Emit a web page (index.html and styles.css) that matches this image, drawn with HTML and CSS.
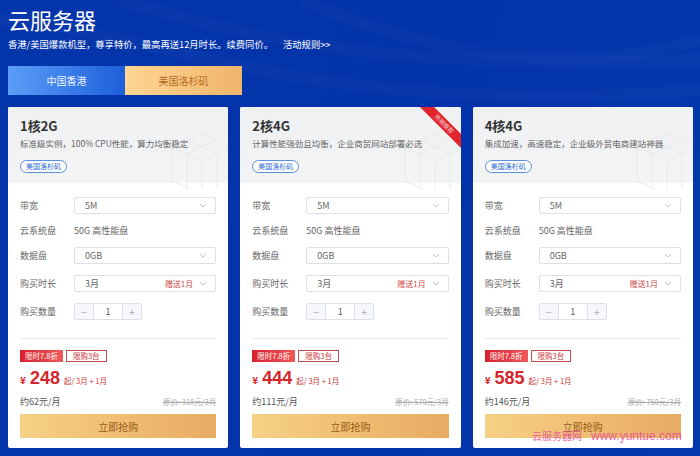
FILE: index.html
```html
<!DOCTYPE html>
<html lang="zh-CN">
  <head>
    <meta charset="UTF-8" />
    <meta name="viewport" content="width=device-width, initial-scale=1.0" />
    <title>云服务器</title>
    <link rel="stylesheet" href="styles.css">
  </head>
  <body>
    <div class="page">
      <svg class="waves" width="700" height="456" viewBox="0 0 700 456">
        <path d="M120 0 C 260 40, 380 70, 700 60" />
        <path d="M0 20 C 160 30, 300 120, 700 90" />
        <path d="M300 0 C 420 50, 560 80, 700 40" />
      </svg>

      <h1 class="title">云服务器</h1>
      <p class="intro">香港/美国爆款机型，尊享特价，最高再送12月时长。续费同价。<span class="rules">活动规则&gt;&gt;</span></p>

      <div class="tabs">
        <div class="tab tab-hk">中国香港</div>
        <div class="tab tab-us">美国洛杉矶</div>
      </div>

      <div class="cards">
        <div class="card">
          <div class="card-head">
            <svg class="cube" width="72" height="64" viewBox="0 0 72 64">
              <path d="M10 22 L40 8 L70 22 L40 36 Z M10 22 L10 56 L40 70 M40 36 L40 70 M70 22 L70 56 M25 15 L55 29 L55 64 M55 15 L25 29 L25 64" />
            </svg>
            <h2 class="plan">1核2G</h2>
            <p class="desc">标准级实例，100% CPU性能，算力均衡稳定</p>
            <span class="region">美国洛杉矶</span>
          </div>
          <div class="card-body">
            <div class="opts">
              <div class="opt">
                <span class="opt-label">带宽</span>
                <div class="select"><span class="sel-val">5M</span><svg class="chev" width="8" height="5" viewBox="0 0 8 5"><polyline points="1,1 4,4 7,1" /></svg></div>
              </div>
              <div class="opt opt-text">
                <span class="opt-label">云系统盘</span>
                <span class="opt-value">50G 高性能盘</span>
              </div>
              <div class="opt">
                <span class="opt-label">数据盘</span>
                <div class="select"><span class="sel-val">0GB</span><svg class="chev" width="8" height="5" viewBox="0 0 8 5"><polyline points="1,1 4,4 7,1" /></svg></div>
              </div>
              <div class="opt">
                <span class="opt-label">购买时长</span>
                <div class="select"><span class="sel-val">3月</span><span class="gift">赠送1月</span><svg class="chev" width="8" height="5" viewBox="0 0 8 5"><polyline points="1,1 4,4 7,1" /></svg></div>
              </div>
              <div class="opt">
                <span class="opt-label">购买数量</span>
                <div class="stepper"><span class="step">−</span><span class="qty">1</span><span class="step">+</span></div>
              </div>
            </div>
            <div class="divider"></div>
            <div class="badges"><span class="badge-off">限时7.8折</span><span class="badge-limit">限购3台</span></div>
            <div class="price"><span class="yen">¥</span><span class="amount">248</span><span class="unit">起/ 3月 + 1月</span></div>
            <div class="monthly"><span>约62元/月</span><span class="orig">原价: 318元/3月</span></div>
            <button class="buy">立即抢购</button>
          </div>
        </div>

        <div class="card">
          <div class="ribbon">热销推荐</div>
          <div class="card-head">
            <svg class="cube" width="72" height="64" viewBox="0 0 72 64">
              <path d="M10 22 L40 8 L70 22 L40 36 Z M10 22 L10 56 L40 70 M40 36 L40 70 M70 22 L70 56 M25 15 L55 29 L55 64 M55 15 L25 29 L25 64" />
            </svg>
            <h2 class="plan">2核4G</h2>
            <p class="desc">计算性能强劲且均衡，企业商贸网站部署必选</p>
            <span class="region">美国洛杉矶</span>
          </div>
          <div class="card-body">
            <div class="opts">
              <div class="opt">
                <span class="opt-label">带宽</span>
                <div class="select"><span class="sel-val">5M</span><svg class="chev" width="8" height="5" viewBox="0 0 8 5"><polyline points="1,1 4,4 7,1" /></svg></div>
              </div>
              <div class="opt opt-text">
                <span class="opt-label">云系统盘</span>
                <span class="opt-value">50G 高性能盘</span>
              </div>
              <div class="opt">
                <span class="opt-label">数据盘</span>
                <div class="select"><span class="sel-val">0GB</span><svg class="chev" width="8" height="5" viewBox="0 0 8 5"><polyline points="1,1 4,4 7,1" /></svg></div>
              </div>
              <div class="opt">
                <span class="opt-label">购买时长</span>
                <div class="select"><span class="sel-val">3月</span><span class="gift">赠送1月</span><svg class="chev" width="8" height="5" viewBox="0 0 8 5"><polyline points="1,1 4,4 7,1" /></svg></div>
              </div>
              <div class="opt">
                <span class="opt-label">购买数量</span>
                <div class="stepper"><span class="step">−</span><span class="qty">1</span><span class="step">+</span></div>
              </div>
            </div>
            <div class="divider"></div>
            <div class="badges"><span class="badge-off">限时7.8折</span><span class="badge-limit">限购3台</span></div>
            <div class="price"><span class="yen">¥</span><span class="amount">444</span><span class="unit">起/ 3月 + 1月</span></div>
            <div class="monthly"><span>约111元/月</span><span class="orig">原价: 570元/3月</span></div>
            <button class="buy">立即抢购</button>
          </div>
        </div>

        <div class="card">
          <div class="card-head">
            <svg class="cube" width="72" height="64" viewBox="0 0 72 64">
              <path d="M10 22 L40 8 L70 22 L40 36 Z M10 22 L10 56 L40 70 M40 36 L40 70 M70 22 L70 56 M25 15 L55 29 L55 64 M55 15 L25 29 L25 64" />
            </svg>
            <h2 class="plan">4核4G</h2>
            <p class="desc">集成加速，高速稳定，企业级外贸电商建站神器</p>
            <span class="region">美国洛杉矶</span>
          </div>
          <div class="card-body">
            <div class="opts">
              <div class="opt">
                <span class="opt-label">带宽</span>
                <div class="select"><span class="sel-val">5M</span><svg class="chev" width="8" height="5" viewBox="0 0 8 5"><polyline points="1,1 4,4 7,1" /></svg></div>
              </div>
              <div class="opt opt-text">
                <span class="opt-label">云系统盘</span>
                <span class="opt-value">50G 高性能盘</span>
              </div>
              <div class="opt">
                <span class="opt-label">数据盘</span>
                <div class="select"><span class="sel-val">0GB</span><svg class="chev" width="8" height="5" viewBox="0 0 8 5"><polyline points="1,1 4,4 7,1" /></svg></div>
              </div>
              <div class="opt">
                <span class="opt-label">购买时长</span>
                <div class="select"><span class="sel-val">3月</span><span class="gift">赠送1月</span><svg class="chev" width="8" height="5" viewBox="0 0 8 5"><polyline points="1,1 4,4 7,1" /></svg></div>
              </div>
              <div class="opt">
                <span class="opt-label">购买数量</span>
                <div class="stepper"><span class="step">−</span><span class="qty">1</span><span class="step">+</span></div>
              </div>
            </div>
            <div class="divider"></div>
            <div class="badges"><span class="badge-off">限时7.8折</span><span class="badge-limit">限购3台</span></div>
            <div class="price"><span class="yen">¥</span><span class="amount">585</span><span class="unit">起/ 3月 + 1月</span></div>
            <div class="monthly"><span>约146元/月</span><span class="orig">原价: 750元/3月</span></div>
            <button class="buy">立即抢购</button>
          </div>
        </div>
      </div>

      <div class="watermark"><span class="wm-cn">云服务器网</span><span class="wm-url">www.yuntue.com</span></div>
    </div>
  </body>
</html>
```

FILE: styles.css
```css
body {
  margin: 0;
  font-family: "Noto Sans CJK SC", "Noto Sans", sans-serif;
  background-color: #0435aa;
}

.page {
  position: relative;
  width: 700px;
  height: 456px;
  padding: 4px 7px 0 8px;
  box-sizing: border-box;
  overflow: hidden;
  background: linear-gradient(100deg, #0535ab 0%, #0333a8 60%, #0538ad 100%);
}

.waves {
  position: absolute;
  top: 0;
  left: 0;
}

.waves path {
  fill: none;
  stroke: rgba(255, 255, 255, 0.025);
  stroke-width: 12;
}

.title {
  position: relative;
  margin: 0;
  font-size: 22px;
  line-height: 30px;
  font-weight: 400;
  color: #fff;
}

.intro {
  position: relative;
  margin: 3px 0 0;
  font-size: 9.3px;
  line-height: 14px;
  color: #fff;
  white-space: nowrap;
}

.rules {
  margin-left: 10px;
}

.tabs {
  position: relative;
  display: flex;
  margin-top: 15px;
}

.tab {
  width: 117px;
  height: 29px;
  display: flex;
  align-items: center;
  justify-content: center;
  font-size: 10px;
}

.tab-hk {
  background: linear-gradient(90deg, #5b9ef6, #1c5fdb);
  color: #e6efff;
}

.tab-us {
  background: linear-gradient(90deg, #fdd693, #f1b46b);
  color: #b46a1e;
}

.cards {
  position: relative;
  display: flex;
  gap: 12px;
  margin-top: 12px;
}

.card {
  position: relative;
  flex: 1;
  height: 341px;
  background-color: #fff;
  border-radius: 2px;
  overflow: hidden;
}

.card-head {
  position: relative;
  height: 76px;
  padding: 10px 12px 0;
  box-sizing: border-box;
  background: linear-gradient(180deg, #eff0f2, #f3f4f6);
}

.cube {
  position: absolute;
  right: -6px;
  bottom: -6px;
}

.cube path {
  fill: none;
  stroke: #e8e9ec;
  stroke-width: 1;
}

.plan {
  position: relative;
  margin: 0;
  font-size: 13px;
  line-height: 18px;
  font-weight: 700;
  color: #333;
}

.desc {
  position: relative;
  margin: 1px 0 0;
  font-size: 8.5px;
  line-height: 14px;
  color: #666;
  white-space: nowrap;
}

.region {
  position: relative;
  display: inline-block;
  margin-top: 7px;
  padding: 0 5px;
  height: 11px;
  line-height: 11px;
  font-size: 7px;
  color: #2b6bd6;
  border: 1px solid #5b8fe0;
  border-radius: 7px;
  background-color: #fff;
}

.ribbon {
  position: absolute;
  top: 12px;
  right: -13px;
  width: 60px;
  height: 10px;
  line-height: 10px;
  text-align: center;
  font-size: 6px;
  color: #ffd6dc;
  background-color: #e0252d;
  transform: rotate(45deg);
  z-index: 2;
}

.card-body {
  padding: 14px 12px 10px;
}

.opts {
  display: flex;
  flex-direction: column;
  gap: 11px;
}

.opt {
  display: flex;
  align-items: center;
  height: 17px;
  font-size: 9px;
  color: #666;
}

.opt-text {
  height: 11px;
}

.opt-label {
  width: 54px;
  flex-shrink: 0;
}

.opt-value {
  color: #666;
}

.select {
  flex: 1;
  height: 17px;
  display: flex;
  align-items: center;
  padding: 0 8px 0 10px;
  border: 1px solid #dcdfe6;
  border-radius: 2px;
  box-sizing: border-box;
  color: #666;
}

.sel-val {
  flex: 1;
}

.gift {
  margin-right: 6px;
  font-size: 8px;
  color: #d24b4b;
}

.chev polyline {
  fill: none;
  stroke: #c0c4cc;
  stroke-width: 1;
}

.stepper {
  display: flex;
  width: 68px;
  height: 17px;
  border: 1px solid #dcdfe6;
  border-radius: 2px;
  box-sizing: border-box;
}

.step {
  width: 18px;
  display: flex;
  align-items: center;
  justify-content: center;
  background-color: #f5f7fa;
  color: #a8abb2;
  font-size: 10px;
}

.step:first-child {
  border-right: 1px solid #dcdfe6;
}

.step:last-child {
  border-left: 1px solid #dcdfe6;
}

.qty {
  flex: 1;
  display: flex;
  align-items: center;
  justify-content: center;
  color: #555;
}

.divider {
  height: 1px;
  margin-top: 18px;
  background-color: #ebebeb;
}

.badges {
  display: flex;
  gap: 3px;
  margin-top: 11px;
}

.badge-off,
.badge-limit {
  height: 12px;
  line-height: 12px;
  padding: 0 5px;
  font-size: 7.5px;
  box-sizing: border-box;
  white-space: nowrap;
}

.badge-off {
  color: #fff;
  background: linear-gradient(90deg, #d9202a, #f05a5a);
}

.badge-limit {
  line-height: 10px;
  padding: 0 6px;
  color: #c33;
  border: 1px solid #c94a4a;
}

.price {
  display: flex;
  align-items: baseline;
  margin-top: 6px;
  height: 20px;
  line-height: 20px;
  color: #d4262c;
}

.yen {
  font-size: 10px;
  font-weight: 700;
  margin-right: 4px;
}

.amount {
  font-family: "Liberation Sans", Arial, sans-serif;
  font-size: 18px;
  font-weight: 700;
  margin-right: 4px;
}

.unit {
  font-size: 7.5px;
  color: #c33;
}

.monthly {
  display: flex;
  justify-content: space-between;
  align-items: center;
  margin-top: 6px;
  height: 14px;
  font-size: 9px;
  color: #555;
}

.orig {
  font-size: 7.5px;
  color: #aaa;
  text-decoration: line-through;
}

.buy {
  display: block;
  width: 100%;
  height: 24px;
  margin-top: 6px;
  padding: 0;
  border: none;
  font-family: inherit;
  font-size: 10px;
  color: #9a5a18;
  background: linear-gradient(90deg, #f6d185, #e8ab62);
}

.watermark {
  position: absolute;
  left: 532px;
  top: 428px;
  display: flex;
  align-items: baseline;
  gap: 9px;
  color: rgba(232, 70, 160, 0.85);
  white-space: nowrap;
  z-index: 3;
}

.wm-cn {
  font-size: 10px;
}

.wm-url {
  font-family: "Liberation Sans", Arial, sans-serif;
  font-size: 12px;
}
```
